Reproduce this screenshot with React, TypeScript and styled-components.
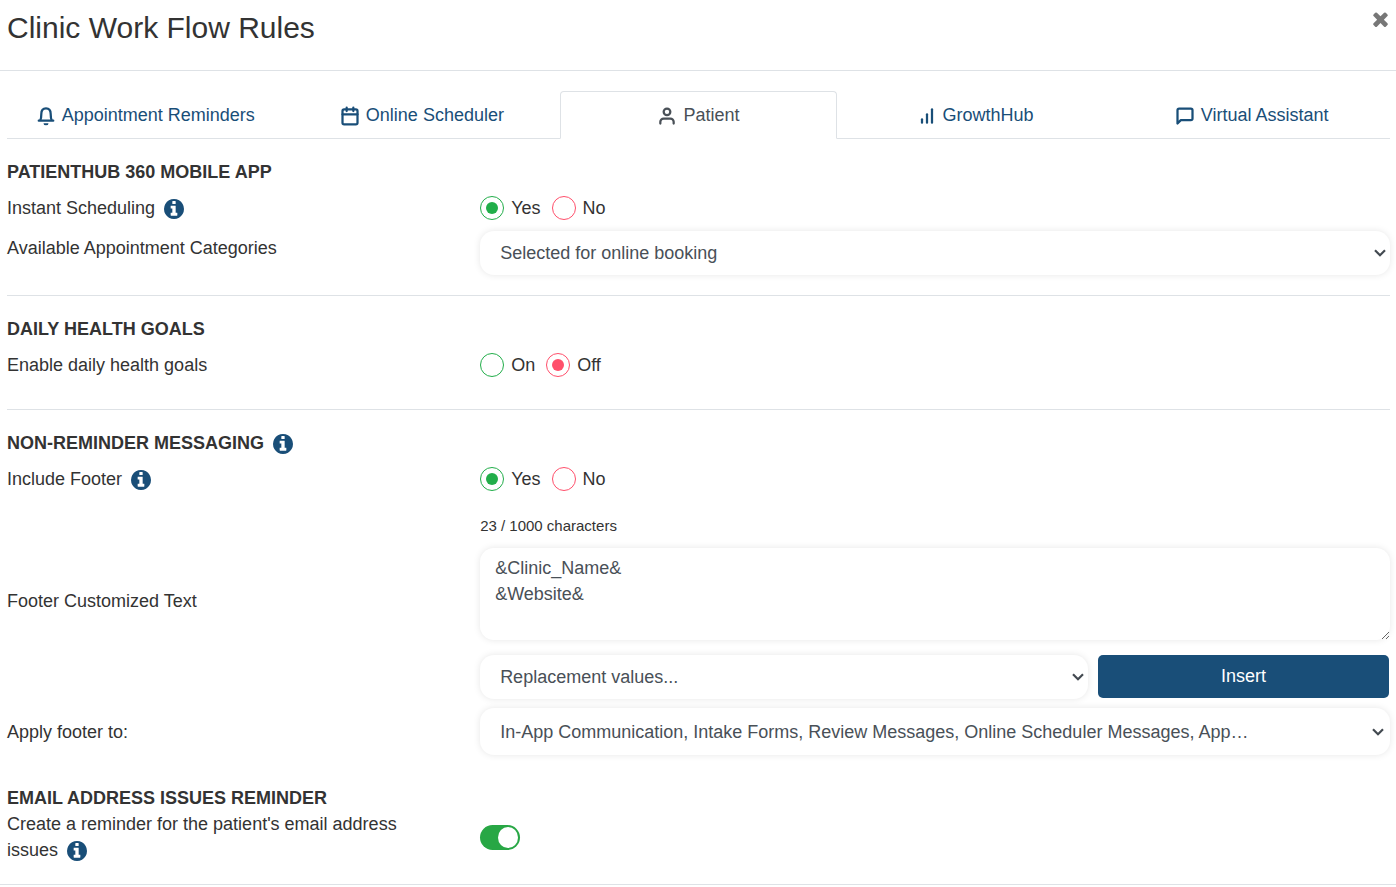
import React, { useState } from "react";
import styled, { createGlobalStyle, css } from "styled-components";
import { FiBarChart, FiCalendar, FiMessageSquare, FiUser } from "react-icons/fi";

const navy = "#194e78";
const green = "#28a745";
const brightGreen = "#22ae4a";
const rose = "#ff4f6b";
const line = "#dee2e6";
const ink = "#333333";
const field = "#495057";

const chevron = `url("data:image/svg+xml,%3Csvg xmlns='http://www.w3.org/2000/svg' width='12' height='8' viewBox='0 0 12 8'%3E%3Cpath d='M1 1.2L6 6.2L11 1.2' fill='none' stroke='%23434a51' stroke-width='2.2'/%3E%3C/svg%3E")`;

const GlobalStyle = createGlobalStyle`
  *, *::before, *::after { box-sizing: border-box; }
  body {
    margin: 0;
    background: #fff;
    color: ${ink};
    font: 18px/26px "Liberation Sans", Arial, sans-serif;
  }
  button, input, select, textarea { font: inherit; margin: 0; }
`;

const Header = styled.header`
  display: flex;
  justify-content: space-between;
  align-items: flex-start;
  padding: 8px 8px 23px 7px;
  border-bottom: 1px solid ${line};
`;

const Title = styled.h1`
  margin: 0;
  font-size: 30px;
  line-height: 39px;
  font-weight: 400;
`;

const CloseButton = styled.button`
  display: flex;
  padding: 4px 0;
  border: 0;
  background: none;
  color: #777;
  cursor: pointer;
  svg {
    width: 15px;
    height: 15px;
    fill: currentColor;
  }
`;

const Main = styled.main`
  padding: 20px 6px 21px 7px;
  border-bottom: 1px solid ${line};
`;

const TabBar = styled.nav`
  display: flex;
  border-bottom: 1px solid ${line};
`;

const Tab = styled.a<{ $active?: boolean }>`
  flex: 1 1 0;
  display: flex;
  align-items: center;
  justify-content: center;
  gap: 6px;
  height: 48px;
  margin-bottom: -1px;
  border: 1px solid transparent;
  border-radius: 4px 4px 0 0;
  color: ${navy};
  text-decoration: none;
  ${(p) =>
    p.$active &&
    css`
      color: ${field};
      background: #fff;
      border-color: ${line} ${line} #fff;
    `}
  svg {
    width: 20px;
    height: 20px;
    stroke-width: 2.7;
    margin-top: 2px;
  }
`;

const Section = styled.section<{ $end?: number; $rule?: boolean }>`
  padding: 20px 0 ${(p) => p.$end ?? 0}px;
  border-bottom: ${(p) => (p.$rule ? `1px solid ${line}` : "0")};
`;

const Heading = styled.h2`
  margin: 0;
  font-size: 18px;
  line-height: 26px;
  font-weight: 700;
`;

const Row = styled.div<{ $min?: number; $top?: boolean; $after?: number }>`
  display: grid;
  grid-template-columns: minmax(0, 13fr) minmax(0, 25fr);
  align-items: ${(p) => (p.$top ? "start" : "center")};
  min-height: ${(p) => p.$min ?? 0}px;
  margin-bottom: ${(p) => p.$after ?? 0}px;
`;

const Label = styled.label<{ $top?: boolean }>`
  padding-right: 45px;
  padding-top: ${(p) => (p.$top ? 4 : 0)}px;
`;

const InfoSvg = styled.svg`
  width: 20px;
  height: 20px;
  margin-left: 9px;
  vertical-align: -5px;
  fill: ${navy};
`;

const Choices = styled.div`
  display: flex;
  gap: 11px;
`;

const Choice = styled.label`
  display: flex;
  align-items: center;
  gap: 7px;
`;

const RadioInput = styled.input<{ $color: string }>`
  appearance: none;
  width: 24px;
  height: 24px;
  padding: 5px;
  border: 1px solid ${(p) => p.$color};
  border-radius: 50%;
  background-clip: content-box;
  &:checked {
    background-color: ${(p) => p.$color};
  }
`;

const fieldLook = css`
  display: block;
  width: 100%;
  border: 0;
  border-radius: 14px;
  background: #fff;
  color: ${field};
  box-shadow: 0 0 7px rgba(0, 0, 0, 0.1);
`;

const Select = styled.select<{ $tall?: boolean }>`
  ${fieldLook}
  appearance: none;
  height: ${(p) => (p.$tall ? 47 : 44)}px;
  padding: 0 24px 0 20px;
  background: #fff ${chevron} no-repeat right ${(p) => (p.$tall ? 6 : 4)}px center;
`;

const TextArea = styled.textarea`
  ${fieldLook}
  height: 92px;
  padding: 7px 15px;
  resize: vertical;
`;

const Counter = styled.div`
  padding: 13px 0 11px;
  font-size: 15px;
  line-height: 22px;
`;

const InsertRow = styled.div`
  display: grid;
  grid-template-columns: 23fr 11fr;
  gap: 10px;
  margin-top: 15px;
  padding-right: 1px;
`;

const InsertButton = styled.button`
  height: 43px;
  padding: 0 0 2px;
  border: 0;
  border-radius: 5px;
  background: ${navy};
  color: #fff;
  cursor: pointer;
`;

const Switch = styled.input`
  appearance: none;
  display: block;
  width: 40px;
  height: 25px;
  padding: 2px;
  border-radius: 13px;
  background: #ccc;
  &::before {
    content: "";
    display: block;
    width: 20px;
    height: 21px;
    border-radius: 50%;
    background: #fff;
  }
  &:checked {
    background: ${green};
  }
  &:checked::before {
    margin-left: 16px;
  }
`;

function InfoIcon() {
  return (
    <InfoSvg viewBox="128 128 1536 1536" aria-hidden="true">
      <path d="M1152 1376v-160q0-14-9-23t-23-9h-96v-512q0-14-9-23t-23-9h-320q-14 0-23 9t-9 23v160q0 14 9 23t23 9h96v320h-96q-14 0-23 9t-9 23v160q0 14 9 23t23 9h448q14 0 23-9t9-23zm-128-896v-160q0-14-9-23t-23-9h-192q-14 0-23 9t-9 23v160q0 14 9 23t23 9h192q14 0 23-9t9-23zm640 416q0 209-103 385.5t-279.5 279.5-385.5 103-385.5-103-279.5-279.5-103-385.5 103-385.5 279.5-279.5 385.5-103 385.5 103 279.5 279.5 103 385.5z" />
    </InfoSvg>
  );
}

function CloseIcon() {
  return (
    <svg viewBox="302 334 1188 1220" aria-hidden="true">
      <path d="M1490 1322q0 40-28 68l-136 136q-28 28-68 28t-68-28l-294-294-294 294q-28 28-68 28t-68-28l-136-136q-28-28-28-68t28-68l294-294-294-294q-28-28-28-68t28-68l136-136q28-28 68-28t68 28l294 294 294-294q28-28 68-28t68 28l136 136q28 28 28 68t-28 68l-294 294 294 294q28 28 28 68z" />
    </svg>
  );
}

function BellIcon() {
  return (
    <svg viewBox="0 0 24 24" fill="none" stroke="currentColor" strokeLinecap="round" strokeLinejoin="round" aria-hidden="true">
      <path d="M3.3 17.6H20.7M5 17.4C6 15.6 6.4 13.5 6.4 9.2C6.4 5 8.6 2.7 12 2.7S17.6 5 17.6 9.2C17.6 13.5 18 15.6 19 17.4" />
      <path d="M9 20.6h6a3 2.6 0 0 1-6 0z" fill="currentColor" stroke="none" />
    </svg>
  );
}

const tabs = [
  { name: "Appointment Reminders", icon: BellIcon },
  { name: "Online Scheduler", icon: FiCalendar },
  { name: "Patient", icon: FiUser },
  { name: "GrowthHub", icon: FiBarChart },
  { name: "Virtual Assistant", icon: FiMessageSquare },
];

function RadioPair({ name, options, initial }: { name: string; options: [string, string]; initial: number }) {
  const [picked, setPicked] = useState(initial);
  return (
    <Choices role="radiogroup" aria-labelledby={`${name}-label`}>
      {options.map((text, i) => (
        <Choice key={text}>
          <RadioInput
            type="radio"
            name={name}
            $color={i === 0 ? brightGreen : rose}
            checked={picked === i}
            onChange={() => setPicked(i)}
          />
          {text}
        </Choice>
      ))}
    </Choices>
  );
}

export default function App() {
  const [footer, setFooter] = useState("&Clinic_Name&\n&Website&");
  return (
    <>
      <GlobalStyle />
      <Header>
        <Title>Clinic Work Flow Rules</Title>
        <CloseButton type="button" aria-label="Close">
          <CloseIcon />
        </CloseButton>
      </Header>
      <Main>
        <TabBar>
          {tabs.map(({ name, icon: Icon }) => (
            <Tab key={name} href="#" $active={name === "Patient"}>
              <Icon />
              {name}
            </Tab>
          ))}
        </TabBar>

        <Section $end={20} $rule>
          <Heading>PATIENTHUB 360 MOBILE APP</Heading>
          <Row $min={46}>
            <Label as="div" id="instant-label">
              Instant Scheduling
              <InfoIcon />
            </Label>
            <RadioPair name="instant" options={["Yes", "No"]} initial={0} />
          </Row>
          <Row $top>
            <Label htmlFor="categories" $top>Available Appointment Categories</Label>
            <Select id="categories">
              <option>Selected for online booking</option>
            </Select>
          </Row>
        </Section>

        <Section $end={21} $rule>
          <Heading>DAILY HEALTH GOALS</Heading>
          <Row $min={46}>
            <Label as="div" id="goals-label">Enable daily health goals</Label>
            <RadioPair name="goals" options={["On", "Off"]} initial={1} />
          </Row>
        </Section>

        <Section $end={10}>
          <Heading>
            NON-REMINDER MESSAGING
            <InfoIcon />
          </Heading>
          <Row $min={46}>
            <Label as="div" id="footer-label">
              Include Footer
              <InfoIcon />
            </Label>
            <RadioPair name="footer" options={["Yes", "No"]} initial={0} />
          </Row>
          <Row $after={9}>
            <Label htmlFor="footer-text">Footer Customized Text</Label>
            <div>
              <Counter>{footer.length} / 1000 characters</Counter>
              <TextArea id="footer-text" value={footer} onChange={(e) => setFooter(e.target.value)} />
              <InsertRow>
                <Select aria-label="Replacement values">
                  <option>Replacement values...</option>
                </Select>
                <InsertButton type="button">Insert</InsertButton>
              </InsertRow>
            </div>
          </Row>
          <Row>
            <Label htmlFor="apply-to">Apply footer to:</Label>
            <Select id="apply-to" $tall>
              <option>In-App Communication, Intake Forms, Review Messages, Online Scheduler Messages, App…</option>
            </Select>
          </Row>
        </Section>

        <Section>
          <Heading>EMAIL ADDRESS ISSUES REMINDER</Heading>
          <Row>
            <Label htmlFor="email-reminder">
              Create a reminder for the patient's email address issues
              <InfoIcon />
            </Label>
            <Switch id="email-reminder" type="checkbox" role="switch" defaultChecked />
          </Row>
        </Section>
      </Main>
    </>
  );
}
